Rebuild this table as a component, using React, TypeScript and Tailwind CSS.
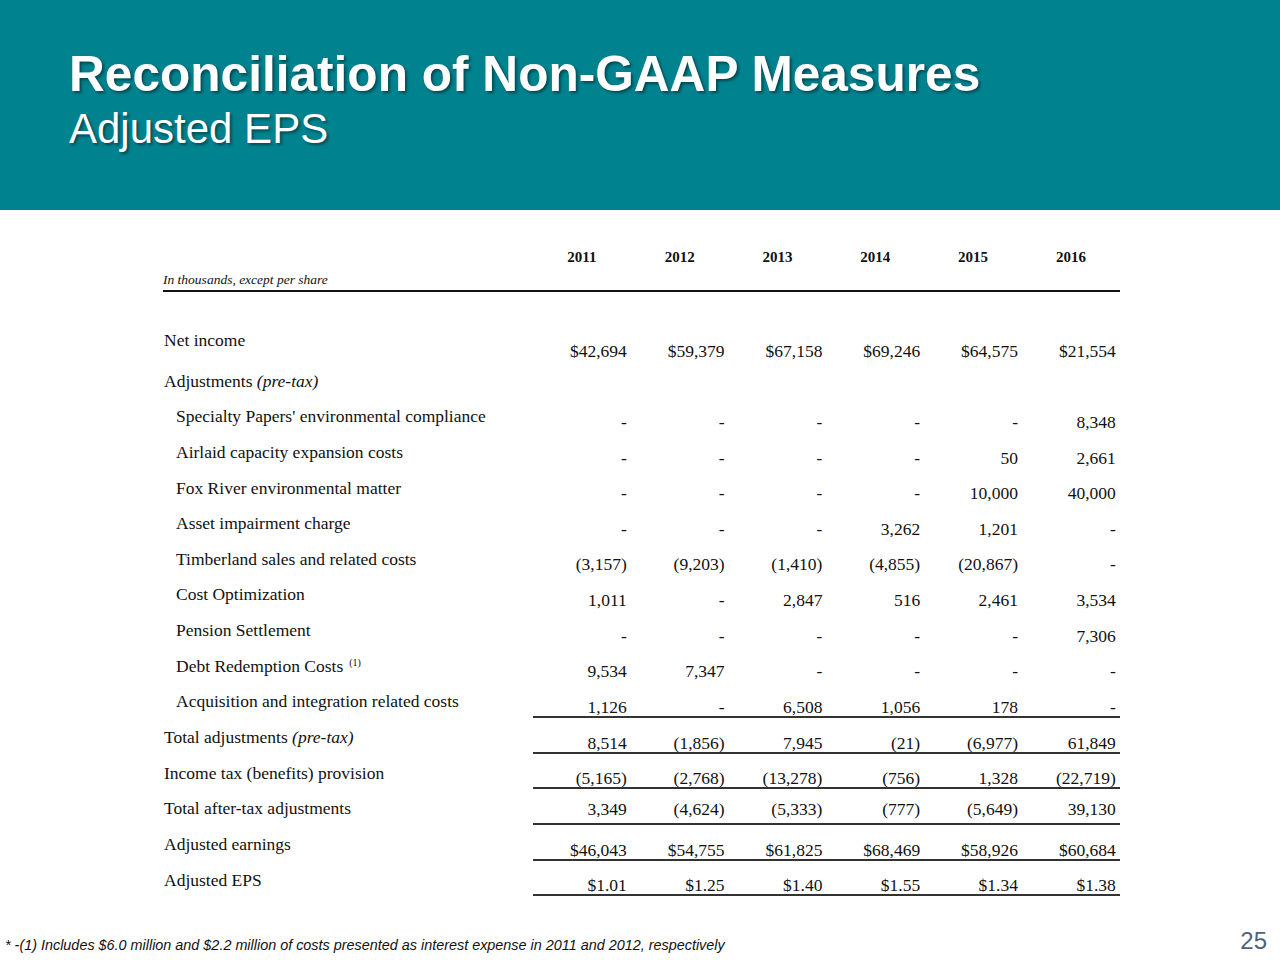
type Row = {
  label: string;
  italic?: string;
  sup?: string;
  indent?: boolean;
  values?: string[];
  line?: boolean;
  mid?: boolean;
  high?: boolean;
};

const years = ["2011", "2012", "2013", "2014", "2015", "2016"];

const rows: Row[] = [
  { label: "Net income", high: true, values: ["$42,694", "$59,379", "$67,158", "$69,246", "$64,575", "$21,554"] },
  { label: "Adjustments ", italic: "(pre-tax)" },
  { label: "Specialty Papers' environmental compliance", indent: true, values: ["-", "-", "-", "-", "-", "8,348"] },
  { label: "Airlaid capacity expansion costs", indent: true, values: ["-", "-", "-", "-", "50", "2,661"] },
  { label: "Fox River environmental matter", indent: true, values: ["-", "-", "-", "-", "10,000", "40,000"] },
  { label: "Asset impairment charge", indent: true, values: ["-", "-", "-", "3,262", "1,201", "-"] },
  { label: "Timberland sales and related costs", indent: true, values: ["(3,157)", "(9,203)", "(1,410)", "(4,855)", "(20,867)", "-"] },
  { label: "Cost Optimization", indent: true, values: ["1,011", "-", "2,847", "516", "2,461", "3,534"] },
  { label: "Pension Settlement", indent: true, values: ["-", "-", "-", "-", "-", "7,306"] },
  { label: "Debt Redemption Costs", sup: "(1)", indent: true, values: ["9,534", "7,347", "-", "-", "-", "-"] },
  { label: "Acquisition and integration related costs", indent: true, values: ["1,126", "-", "6,508", "1,056", "178", "-"], line: true },
  { label: "Total adjustments ", italic: "(pre-tax)", values: ["8,514", "(1,856)", "7,945", "(21)", "(6,977)", "61,849"], line: true },
  { label: "Income tax (benefits) provision", values: ["(5,165)", "(2,768)", "(13,278)", "(756)", "1,328", "(22,719)"], line: true },
  { label: "Total after-tax adjustments", values: ["3,349", "(4,624)", "(5,333)", "(777)", "(5,649)", "39,130"], line: true, mid: true },
  { label: "Adjusted earnings", values: ["$46,043", "$54,755", "$61,825", "$68,469", "$58,926", "$60,684"], line: true },
  { label: "Adjusted EPS", values: ["$1.01", "$1.25", "$1.40", "$1.55", "$1.34", "$1.38"], line: true },
];

const TableRow = ({ row }: { row: Row }) => (
  <div className="grid grid-cols-[370px_repeat(6,97.8px)] h-[35.65px]">
    <div
      className={`leading-[18px] whitespace-nowrap ${row.high ? "pt-[5px]" : "pt-[10px]"} ${
        row.indent ? "pl-[13px]" : "pl-[1px]"
      }`}
    >
      {row.label}
      {row.italic && <span className="italic">{row.italic}</span>}
      {row.sup && (
        <sup className="ml-[6px] text-[10px] relative -top-[6px]">{row.sup}</sup>
      )}
    </div>
    {years.map((y, i) => (
      <div
        key={y}
        className={`flex items-end justify-end pr-[4px] leading-[18px] border-b-2 ${
          row.line ? "border-[#333333]" : "border-transparent"
        } ${row.mid ? "pb-[5px]" : ""}`}
      >
        {row.values ? row.values[i] : ""}
      </div>
    ))}
  </div>
);

export default function App() {
  return (
    <div className="w-[1280px] h-[960px] bg-white flex flex-col overflow-hidden">
      {/* Title band */}
      <header className="h-[210px] bg-[#01838f] pl-[69px] pt-[49px] text-white font-['Liberation_Sans',Arial,sans-serif] [text-shadow:2px_2px_3px_rgba(0,0,0,0.45)]">
        <h1 className="text-[49.6px] leading-[50px] font-bold">
          Reconciliation of Non-GAAP Measures
        </h1>
        <h2 className="mt-[9px] text-[42px] leading-[42px]">Adjusted EPS</h2>
      </header>

      {/* Table */}
      <main className="pl-[163px] pt-[37px] text-[17.5px] text-[#111111] font-['Liberation_Serif','Times_New_Roman',serif]">
        <div className="w-[957px]">
          <div className="grid grid-cols-[370px_repeat(6,97.8px)] h-[20px] leading-[20px] text-[15px] font-bold">
            <div />
            {years.map((y) => (
              <div key={y} className="text-center">
                {y}
              </div>
            ))}
          </div>
          <div className="pt-[5px] pb-[3px] leading-[15px] text-[13.5px] italic border-b-2 border-[#111111]">
            In thousands, except per share
          </div>
          <div className="mt-[34px]">
            {rows.map((r) => (
              <TableRow key={r.label} row={r} />
            ))}
          </div>
        </div>
      </main>

      {/* Footer */}
      <footer className="mt-auto flex items-end justify-between pl-[5px] pr-[13px] pb-[6px] font-['Liberation_Sans',Arial,sans-serif]">
        <p className="text-[14.4px] leading-[18px] italic text-[#111111] whitespace-nowrap">
          * -(1) Includes $6.0 million and $2.2 million of costs presented as interest expense in 2011 and 2012, respectively
        </p>
        <span className="text-[24px] leading-[24px] pb-[1px] text-[#50627a]">25</span>
      </footer>
    </div>
  );
}
